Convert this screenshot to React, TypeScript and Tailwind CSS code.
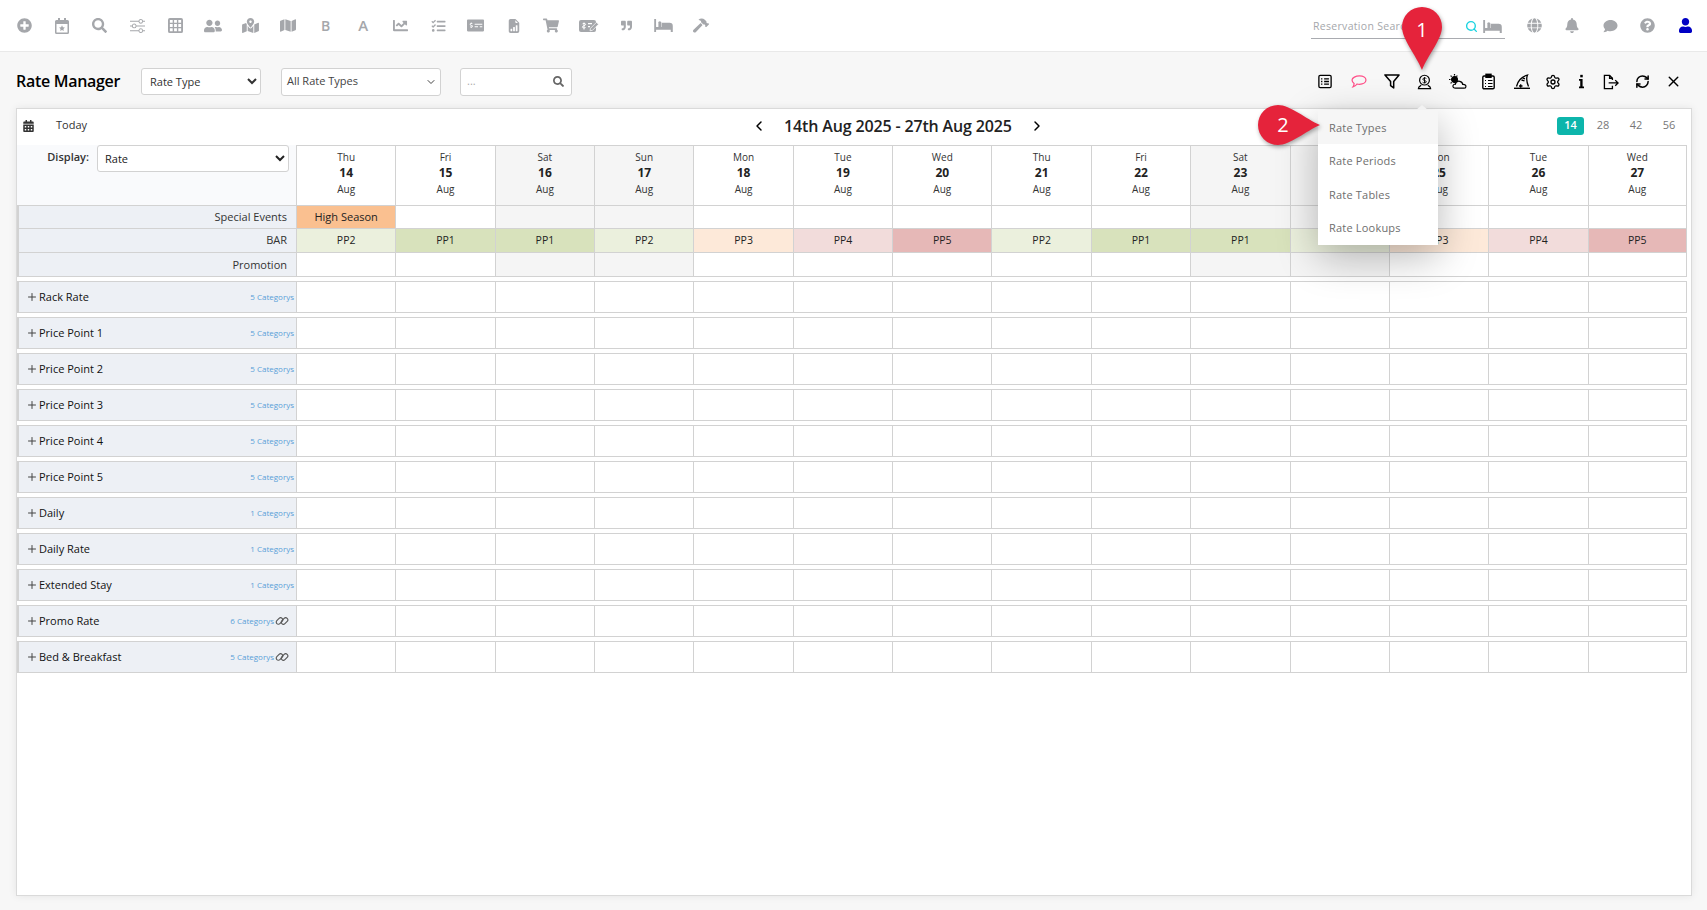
import { ChevronDown, ChevronLeft, ChevronRight, Plus, RefreshCw, Search, Settings, X } from "lucide-react";
import {
  FaBell,
  FaCalendarAlt,
  FaChartLine,
  FaComment,
  FaGlobe,
  FaHammer,
  FaMap,
  FaMapMarkedAlt,
  FaMoneyCheckAlt,
  FaPlusCircle,
  FaQuestionCircle,
  FaQuoteRight,
  FaSearch,
  FaShoppingCart,
  FaTasks,
  FaUser,
  FaUserFriends,
} from "react-icons/fa";
import { BsFileEarmarkBarGraphFill, BsSliders } from "react-icons/bs";

const font = "font-['Open_Sans',sans-serif]";
const line = "border-[#d2d2d2]";

// small svgs for what the icon packs don't have
function CalendarStar() {
  return (
    <svg viewBox="0 0 14 16" className="h-[16px] w-[14px]" fill="#a5a7ab">
      <path d="M3 0h2v2h4V0h2v2h1.5A1.5 1.5 0 0 1 14 3.5v11a1.5 1.5 0 0 1-1.5 1.5h-11A1.5 1.5 0 0 1 0 14.5v-11A1.5 1.5 0 0 1 1.500 2H3z" />
      <rect x="1.500" y="6" width="11" height="8.500" fill="#fff" />
      <path d="M7 7.300l.9 1.900 2 .3-1.450 1.400.35 2L7 12l-1.800.9.350-2L4.100 9.500l2-.3z" />
    </svg>
  );
}

function GridIcon() {
  return (
    <svg viewBox="0 0 16 16" className="h-[15px] w-[15px]" fill="#a5a7ab">
      <path
        fillRule="evenodd"
        d="M2 0h12a2 2 0 0 1 2 2v12a2 2 0 0 1-2 2H2a2 2 0 0 1-2-2V2a2 2 0 0 1 2-2zM2 2v3h3V2zm4.500 0v3h3V2zM11 2v3h3V2zM2 6.500v3h3v-3zm4.500 0v3h3v-3zm4.500 0v3h3v-3zM2 11v3h3v-3zm4.500 0v3h3v-3zm4.500 0v3h3v-3z"
      />
    </svg>
  );
}

function BedIcon({ color = "#a5a7ab" }: { color?: string }) {
  return (
    <svg viewBox="0 0 20 14" className="h-[13px] w-[19px]" fill={color}>
      <path d="M0 0h2v8.500h2.500V5h3v3.500H8V4h8.500A3.500 3.500 0 0 1 20 7.500V14h-2.200v-2.500H2V14H0z" />
      <circle cx="6" cy="4" r="1.700" />
    </svg>
  );
}

function MoneyEdit() {
  return (
    <svg viewBox="0 0 20 14" className="h-[14px] w-[20px]" fill="#a5a7ab">
      <rect x="0" y="1" width="17" height="12" rx="2" />
      <path d="M9 4h4v1.300H9zM9 7h2v1.300H9z" fill="#fff" />
      <path d="M5 3.500v7M3.300 5.200c0-1 3.400-1 3.400 0 0 1.800-3.400 1.200-3.400 3 0 1 3.400 1 3.400 0" stroke="#fff" strokeWidth="1" fill="none" />
      <path d="M11 11.800l.5-2.500 6-6 2 2-6 6z" stroke="#fff" strokeWidth=".7" />
    </svg>
  );
}

function RateListIcon() {
  return (
    <svg viewBox="0 0 16 16" className="h-[15px] w-[14px]" fill="none" stroke="#000" strokeWidth="1.500">
      <rect x="1" y="1" width="14" height="14" rx="1.500" />
      <path d="M3.500 5h1.500M3.500 8h1.500M3.500 11h1.500M7 5h5.500M7 8h5.500M7 11h5.500" />
    </svg>
  );
}

function BubbleIcon() {
  return (
    <svg viewBox="0 0 17 14" className="h-[13px] w-[16px]" fill="none" stroke="#ff4f88" strokeWidth="1.300">
      <path d="M9 1c4 0 7 1.900 7 4.500S13 10 9 10c-.9 0-1.800-.1-2.600-.3C5.500 11 3.800 12.500 2 12.800c.8-1 1.200-2.200 1.200-3.700C1.800 8.200 1 7 1 5.500 1 2.900 5 1 9 1z" />
    </svg>
  );
}

function FunnelIcon() {
  return (
    <svg viewBox="0 0 17 16" className="h-[15px] w-[16px]" fill="none" stroke="#000" strokeWidth="1.600" strokeLinejoin="round">
      <path d="M1 1h15l-5.700 7v6.800L7 12.500V8z" />
    </svg>
  );
}

function CoinStandIcon() {
  return (
    <svg viewBox="0 0 16 16" className="h-[16px] w-[15px]" fill="none" stroke="#000" strokeWidth="1.300">
      <circle cx="8" cy="6" r="5.200" />
      <path d="M10 4.300C9.300 3.400 6.200 3.400 6.200 5c0 1.800 3.700 1 3.700 2.800 0 1.500-3 1.500-3.900.5M8 2.800v6.400" strokeWidth="1" />
      <path d="M4.500 11.500C3 12.300 1.500 13 1.500 15h13c0-2-1.500-2.700-3-3.500" />
    </svg>
  );
}

function CloudSunIcon() {
  return (
    <svg viewBox="0 0 18 15" className="h-[15px] w-[18px]" fill="none" stroke="#000" strokeWidth="1.200">
      <circle cx="5.500" cy="5.500" r="2.900" fill="#000" />
      <path d="M5.500 0v1.500M0 5.500h1.500M1.600 1.600l1.100 1.100M8.400 1.600L7.300 2.700M1.600 9.400l1.100-1.100" />
      <path d="M6.500 14.200c-2 0-2.800-1.300-2.500-2.500.3-1 1.200-1.600 2.200-1.400.6-2.200 2.500-3.500 4.600-3 1.800.4 2.800 1.700 2.900 3.100 2.200-.2 3.500 1.100 3.200 2.400-.2 1-1 1.400-2 1.400z" fill="#f7f7f7" />
    </svg>
  );
}

function ClipboardIcon() {
  return (
    <svg viewBox="0 0 13 16" className="h-[17px] w-[13px]" fill="none" stroke="#000" strokeWidth="1.400">
      <rect x=".8" y="2.500" width="11.400" height="12.800" rx="1.300" />
      <rect x="4" y=".8" width="5" height="3" fill="#000" />
      <path d="M3 7h1M6 7h4.500M3 10h1M6 10h4.500M3 13h1M6 13h4.500" strokeWidth="1.200" />
    </svg>
  );
}

function SharkFinIcon() {
  return (
    <svg viewBox="0 0 16 15" className="h-[15px] w-[16px]" fill="none" stroke="#000" strokeWidth="1.300">
      <path d="M2.500 12.500C3.500 8 7 3 13.500 1c-1.500 3.500-.5 8 1 11.500" />
      <path d="M0 14.300h16" strokeWidth="1.400" />
      <path d="M5 12h3.500M6.700 10.200v3.500M7.500 6l3 .8M8.500 3.800l2.500 1" />
    </svg>
  );
}

function ExportIcon() {
  return (
    <svg viewBox="0 0 17 16" className="h-[16px] w-[16px]" fill="none" stroke="#000" strokeWidth="1.400">
      <path d="M10 6V4L7 1H1.500v14H10v-3" />
      <path d="M7 1v3h3M6 9h10M13 6l3 3-3 3" />
    </svg>
  );
}

function InfoStemIcon() {
  return (
    <svg viewBox="0 0 6 16" className="h-[15px] w-[5px]" fill="#000">
      <rect x="1.500" y="0" width="3" height="3" />
      <path d="M0 5h4.300v9H6v2H0v-2h1.500V7H0z" />
    </svg>
  );
}

function ChainIcon() {
  return (
    <svg viewBox="0 0 15 12" className="ml-[1px] mr-[7px] h-[12px] w-[14px]" fill="none" stroke="#555" strokeWidth="1.200">
      <rect x=".8" y="3.700" width="8" height="4.600" rx="2.300" transform="rotate(-45 4.800 6)" />
      <rect x="6.200" y="3.700" width="8" height="4.600" rx="2.300" transform="rotate(-45 10.200 6)" />
    </svg>
  );
}

const topIcons = [
  <FaPlusCircle className="h-[15px] w-[15px]" />,
  <CalendarStar />,
  <FaSearch className="h-[15px] w-[15px]" />,
  <BsSliders className="h-[15px] w-[15px]" />,
  <GridIcon />,
  <FaUserFriends className="h-[16px] w-[18px]" />,
  <FaMapMarkedAlt className="h-[15px] w-[17px]" />,
  <FaMap className="h-[15px] w-[16px]" />,
  <span className="text-[14px] font-semibold">B</span>,
  <span className="text-[15px] font-semibold">A</span>,
  <FaChartLine className="h-[15px] w-[15px]" />,
  <FaTasks className="h-[14px] w-[15px]" />,
  <FaMoneyCheckAlt className="h-[15px] w-[17px]" />,
  <BsFileEarmarkBarGraphFill className="h-[16px] w-[14px]" />,
  <FaShoppingCart className="h-[15px] w-[16px]" />,
  <MoneyEdit />,
  <FaQuoteRight className="h-[11px] w-[13px]" />,
  <BedIcon />,
  <FaHammer className="h-[15px] w-[16px]" />,
];

interface Day {
  dow: string;
  date: number;
  bar: string;
  weekend?: boolean;
}

const barColors: Record<string, string> = {
  PP1: "bg-[#d8e2bc]",
  PP2: "bg-[#ebf0dd]",
  PP3: "bg-[#fde9d9]",
  PP4: "bg-[#f2dcdb]",
  PP5: "bg-[#e6b8b7]",
};

const days: Day[] = [
  { dow: "Thu", date: 14, bar: "PP2" },
  { dow: "Fri", date: 15, bar: "PP1" },
  { dow: "Sat", date: 16, bar: "PP1", weekend: true },
  { dow: "Sun", date: 17, bar: "PP2", weekend: true },
  { dow: "Mon", date: 18, bar: "PP3" },
  { dow: "Tue", date: 19, bar: "PP4" },
  { dow: "Wed", date: 20, bar: "PP5" },
  { dow: "Thu", date: 21, bar: "PP2" },
  { dow: "Fri", date: 22, bar: "PP1" },
  { dow: "Sat", date: 23, bar: "PP1", weekend: true },
  { dow: "Sun", date: 24, bar: "PP2", weekend: true },
  { dow: "Mon", date: 25, bar: "PP3" },
  { dow: "Tue", date: 26, bar: "PP4" },
  { dow: "Wed", date: 27, bar: "PP5" },
];

const rateRows = [
  { name: "Rack Rate", count: 5 },
  { name: "Price Point 1", count: 5 },
  { name: "Price Point 2", count: 5 },
  { name: "Price Point 3", count: 5 },
  { name: "Price Point 4", count: 5 },
  { name: "Price Point 5", count: 5 },
  { name: "Daily", count: 1 },
  { name: "Daily Rate", count: 1 },
  { name: "Extended Stay", count: 1 },
  { name: "Promo Rate", count: 6, linked: true },
  { name: "Bed & Breakfast", count: 5, linked: true },
];

const gridCols = "grid grid-cols-[279px_repeat(14,minmax(0,1fr))]";

function LabelCell({ label, h }: { label: string; h: string }) {
  return (
    <div className={`${h} flex items-center justify-end border-b border-l-2 ${line} bg-[#edf0f5] pr-[9px] text-[11px] text-[#333]`}>
      {label}
    </div>
  );
}

export default function App() {
  return (
    <div className={`${font} relative flex h-[910px] w-[1707px] flex-col overflow-hidden bg-[#f7f7f7] text-black`}>
      {/* top nav */}
      <div className="flex h-[52px] items-center border-b border-[#e9e9e9] bg-white pl-[6px] text-[#a5a7ab]">
        {topIcons.map((icon, i) => (
          <div key={i} className="flex w-[37.6px] items-center justify-center">
            {icon}
          </div>
        ))}
        <div className="ml-auto mr-[3px] flex items-center">
          <div className="flex h-[26px] w-[194px] items-center border-b border-[#a9abb0] pl-[2px] pr-[3px] pt-[3px]">
            <span className="text-[10.5px] tracking-[0.3px] text-[#a5a7ab]">Reservation Search</span>
            <Search className="ml-auto h-[13px] w-[13px] text-[#19d3e0]" strokeWidth={2.5} />
            <div className="ml-[5px]">
              <BedIcon />
            </div>
          </div>
          <div className="ml-[11px] flex items-center">
            <div className="flex w-[37.6px] justify-center"><FaGlobe className="h-[15px] w-[15px]" /></div>
            <div className="flex w-[37.6px] justify-center"><FaBell className="h-[15px] w-[14px]" /></div>
            <div className="flex w-[37.6px] justify-center"><FaComment className="h-[14px] w-[15px]" /></div>
            <div className="flex w-[37.6px] justify-center"><FaQuestionCircle className="h-[15px] w-[15px]" /></div>
            <div className="flex w-[37.6px] justify-center"><FaUser className="h-[15px] w-[13px] text-[#0000c4]" /></div>
          </div>
        </div>
      </div>

      {/* title row */}
      <div className="mb-[13px] mt-[16px] flex h-[27px] items-center pl-[16px]">
        <h1 className="mt-[-2px] w-[125px] text-[16px] font-semibold tracking-[-0.3px]">Rate Manager</h1>
        <select className={`h-[27px] w-[120px] rounded-[3px] border ${line} bg-white pl-[4px] text-[11px] text-[#333]`}>
          <option>Rate Type</option>
        </select>
        <div className={`ml-[20px] flex h-[28px] w-[160px] items-center justify-between rounded-[3px] border ${line} bg-white pl-[5px] pr-[3px] text-[11px] text-[#444]`}>
          All Rate Types
          <ChevronDown className="h-[12px] w-[12px]" />
        </div>
        <div className={`ml-[19px] flex h-[28px] w-[112px] items-center justify-between rounded-[3px] border ${line} bg-white pl-[6px] pr-[7px] text-[11px] text-[#aaa]`}>
          ...
          <FaSearch className="h-[11px] w-[11px] text-[#666]" />
        </div>
        <div className="ml-auto mr-[23px] flex items-center">
          <div className="flex w-[22px] justify-center"><RateListIcon /></div>
          <div className="ml-[12px] flex w-[22px] justify-center"><BubbleIcon /></div>
          <div className="ml-[11px] flex w-[22px] justify-center"><FunnelIcon /></div>
          <div className="ml-[10px] flex w-[22px] justify-center"><CoinStandIcon /></div>
          <div className="ml-[12px] flex w-[22px] justify-center"><CloudSunIcon /></div>
          <div className="ml-[8px] flex w-[22px] justify-center"><ClipboardIcon /></div>
          <div className="ml-[12px] flex w-[22px] justify-center"><SharkFinIcon /></div>
          <div className="ml-[9px] flex w-[22px] justify-center"><Settings className="h-[16px] w-[16px]" /></div>
          <div className="ml-[6px] flex w-[22px] justify-center"><InfoStemIcon /></div>
          <div className="ml-[8px] flex w-[22px] justify-center"><ExportIcon /></div>
          <div className="ml-[9px] flex w-[22px] justify-center"><RefreshCw className="h-[15px] w-[15px]" strokeWidth={2.4} /></div>
          <div className="ml-[9px] flex w-[22px] justify-center"><X className="h-[17px] w-[17px]" /></div>
        </div>
      </div>

      {/* panel */}
      <div className="ml-[16px] flex h-[788px] w-[1676px] flex-col border border-[#dadada] bg-white shadow-[0_0_8px_rgba(0,0,0,0.08)]">
        <div className="flex h-[36px] shrink-0 items-center pb-[3px]">
          <FaCalendarAlt className="ml-[6px] h-[12px] w-[11px] text-[#333]" />
          <span className="ml-[22px] text-[11px] text-[#333]">Today</span>
          <ChevronLeft className="ml-[664px] h-[16px] w-[16px]" strokeWidth={2.2} />
          <span className="ml-[17px] text-[16px] font-semibold tracking-[-0.15px] text-[#222]">14th Aug 2025 - 27th Aug 2025</span>
          <ChevronRight className="ml-[17px] h-[16px] w-[16px]" strokeWidth={2.2} />
          <div className="ml-auto mr-[12px] flex items-center text-[11px] text-[#777]">
            <span className="flex h-[18px] w-[27px] items-center justify-center rounded-[3px] bg-[#0db5ab] font-semibold text-white">14</span>
            <span className="ml-[9px] w-[20px] text-center">28</span>
            <span className="ml-[13px] w-[20px] text-center">42</span>
            <span className="ml-[13px] w-[20px] text-center">56</span>
          </div>
        </div>

        <div className="w-[1670px]">
          {/* header block */}
          <div className={gridCols}>
            <div className={`flex h-[61px] items-start bg-[#f9fafc] pt-0 ${line} border-b`}>
              <span className="mt-[4px] w-[72px] text-right text-[11px] font-semibold text-[#333]">Display:</span>
              <select className={`ml-[8px] h-[27px] w-[192px] rounded-[3px] border ${line} bg-white pl-[3px] text-[11px] text-[#222]`}>
                <option>Rate</option>
              </select>
            </div>
            {days.map((d) => (
              <div
                key={d.date}
                className={`flex h-[61px] flex-col items-center border-b border-l border-t ${line} ${d.weekend ? "bg-[#f5f5f5]" : "bg-white"} ${d.date === 27 ? "border-r" : ""} pt-[3px] text-[10px] leading-[16px] text-[#333]`}
              >
                <span>{d.dow}</span>
                <span className="text-[12px] font-bold text-[#222]">{d.date}</span>
                <span>Aug</span>
              </div>
            ))}

            <LabelCell label="Special Events" h="h-[23px]" />
            {days.map((d, i) => (
              <div
                key={d.date}
                className={`flex h-[23px] items-center justify-center border-b border-l ${line} ${i === 0 ? "bg-[#fac090]" : d.weekend ? "bg-[#f5f5f5]" : "bg-white"} ${i === 13 ? "border-r" : ""} text-[11px] text-[#222]`}
              >
                {i === 0 ? "High Season" : ""}
              </div>
            ))}

            <LabelCell label="BAR" h="h-[24px]" />
            {days.map((d, i) => (
              <div
                key={d.date}
                className={`flex h-[24px] items-center justify-center border-b border-l ${line} ${barColors[d.bar]} ${i === 13 ? "border-r" : ""} pt-[1px] text-[10.5px] text-[#222]`}
              >
                {d.bar}
              </div>
            ))}

            <LabelCell label="Promotion" h="h-[24px] pt-[1px]" />
            {days.map((d, i) => (
              <div key={d.date} className={`h-[24px] border-b border-l ${line} ${d.weekend ? "bg-[#f5f5f5]" : "bg-white"} ${i === 13 ? "border-r" : ""}`} />
            ))}
          </div>

          {/* rate rows */}
          <div className="mt-[4px] flex flex-col gap-[4px]">
            {rateRows.map((r) => (
              <div key={r.name} className={gridCols}>
                <div className={`flex h-[32px] items-center border-b border-l-2 border-t ${line} bg-[#edf0f5] pl-[7px] text-[11px] text-[#111]`}>
                  <Plus className="h-[12px] w-[12px] text-[#444]" />
                  <span className="ml-[1px]">{r.name}</span>
                  <span className={`ml-auto text-[8px] text-[#5a9fd8] ${r.linked ? "" : "mr-[2px]"}`}>
                    {r.count} Categorys
                  </span>
                  {r.linked && <ChainIcon />}
                </div>
                {days.map((d, i) => (
                  <div key={d.date} className={`h-[32px] border-b border-l border-t ${line} ${i === 13 ? "border-r" : ""}`} />
                ))}
              </div>
            ))}
          </div>
        </div>
      </div>

      {/* rate menu popover */}
      <div className="absolute left-[1318px] top-[110px] z-10 flex h-[135px] w-[120px] flex-col bg-white text-[11px] tracking-[0.2px] text-[#6e6e6e] shadow-[0_12px_40px_rgba(0,0,0,0.28)]">
        <div className="absolute left-[98px] top-[-5px] h-0 w-0 border-x-[6px] border-b-[5px] border-x-transparent border-b-[#f2f2f2]" />
        <div className="flex h-[34px] items-center bg-[#f6f6f6] pl-[11px] pt-[2px]">Rate Types</div>
        <div className="flex h-[33px] items-center pl-[11px] pt-[2px]">Rate Periods</div>
        <div className="flex h-[34px] items-center pl-[11px] pt-[2px]">Rate Tables</div>
        <div className="flex h-[33px] items-center pl-[11px] pt-[2px]">Rate Lookups</div>
      </div>

      {/* callouts */}
      <div className="absolute left-[1402px] top-[7px] z-20 h-[63px] w-[40px]">
        <svg viewBox="0 0 40 63" className="h-[63px] w-[40px] drop-shadow-[1px_2px_2px_rgba(0,0,0,0.35)]" fill="#e5233b">
          <path d="M20 0A20 20 0 0 1 40 20C40 32 26 48 20 63C14 48 0 32 0 20A20 20 0 0 1 20 0Z" />
        </svg>
        <span className="absolute left-0 top-[9px] w-[40px] text-center text-[20px] leading-[27px] text-white">1</span>
      </div>
      <div className="absolute left-[1258px] top-[105px] z-20 h-[40px] w-[62px]">
        <svg viewBox="0 0 62 40" className="h-[40px] w-[62px] drop-shadow-[1px_2px_2px_rgba(0,0,0,0.35)]" fill="#e5233b">
          <path d="M0 20A20 20 0 0 1 20 0C32 0 48 14 62 20C48 26 32 40 20 40A20 20 0 0 1 0 20Z" />
        </svg>
        <span className="absolute left-[15px] top-[6px] w-[20px] text-center text-[20px] leading-[27px] text-white">2</span>
      </div>
    </div>
  );
}
